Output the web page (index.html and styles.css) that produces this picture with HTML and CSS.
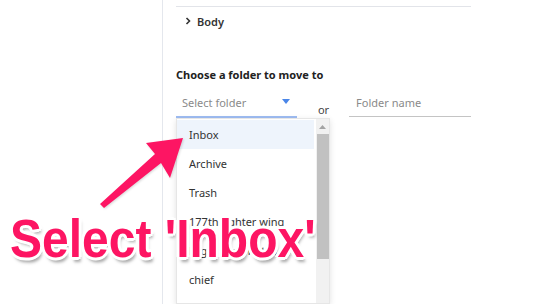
FILE: index.html
```html
<!DOCTYPE html>
<html lang="en">
<head>
    <meta charset="UTF-8">
    <title>Move to folder</title>
    <link rel="stylesheet" href="styles.css">
</head>
<body>
    <div class="side"></div>

    <main class="panel">
        <div class="divider"></div>

        <div class="section-row">
            <svg class="chevron" width="6" height="8" viewBox="0 0 6 8">
                <path d="M1.5 1 L4.5 4 L1.5 7" fill="none" stroke="#333" stroke-width="1.6"/>
            </svg>
            <span>Body</span>
        </div>

        <h2 class="heading">Choose a folder to move to</h2>

        <div class="move-row">
            <div class="select">
                <span class="placeholder">Select folder</span>
                <svg class="caret" width="8" height="5" viewBox="0 0 8 5">
                    <path d="M0 0 H8 L4 5 Z" fill="#4a86e8"/>
                </svg>

                <ul class="dropdown">
                    <li class="active">Inbox</li>
                    <li>Archive</li>
                    <li>Trash</li>
                    <li>177th fighter wing</li>
                    <li>Flight crew notes</li>
                    <li>chief</li>
                </ul>
                <div class="scrollbar">
                    <svg class="scroll-up" width="7" height="4" viewBox="0 0 7 4">
                        <path d="M0 4 L3.5 0 L7 4 Z" fill="#a3a3a3"/>
                    </svg>
                    <div class="thumb"></div>
                </div>
            </div>

            <span class="or">or</span>

            <div class="folder-input">
                <span class="placeholder">Folder name</span>
            </div>
        </div>
    </main>

    <svg class="arrow" width="549" height="304" viewBox="0 0 549 304">
        <polygon points="183,138 146,143 155,154 100,204 104,208 161,163 170,178" fill="#fd1563"/>
    </svg>

    <div class="callout">Select 'Inbox'</div>
</body>
</html>
```

FILE: styles.css
```css
html{
    overflow: hidden;
}

body{
    margin: 0;
    display: flex;
    height: 304px;
    overflow: hidden;
    background-color: white;
    font-family: "Noto Sans", "Open Sans", sans-serif;
    font-size: 11px;
    color: #333;
}

.side{
    width: 162px;
    border-right: 1px solid #e4e7ed;
    flex-shrink: 0;
}

.panel{
    padding-left: 13px;
    width: 295px;
}

.divider{
    margin-top: 6px;
    height: 1px;
    background-color: #e2e4e9;
}

.section-row{
    display: flex;
    align-items: center;
    gap: 6px;
    height: 28px;
    padding-left: 9px;
    font-weight: 600;
}

.heading{
    margin: 32px 0 0 0;
    font-size: 11px;
    line-height: 16px;
    font-weight: bold;
    color: #222;
}

.move-row{
    display: flex;
    align-items: flex-start;
    margin-top: 5px;
}

.select{
    position: relative;
    width: 108px;
    height: 28px;
    border-bottom: 2px solid #9ebcf2;
    display: flex;
    align-items: center;
    justify-content: space-between;
    padding: 0 7px 0 6px;
}

.placeholder{
    color: #8a8a8a;
}

.caret{
    margin-top: -2px;
}

.dropdown{
    position: absolute;
    top: 30px;
    left: 0;
    width: 154px;
    height: 186px;
    margin: 0;
    padding: 1px 15px 0 0;
    box-sizing: border-box;
    list-style: none;
    background-color: white;
    border: 1px solid #e6e6e6;
    box-shadow: 0 2px 6px rgba(0, 0, 0, 0.12);
    overflow: hidden;
}

.dropdown li{
    height: 29px;
    line-height: 29px;
    padding-left: 12px;
}

.dropdown li.active{
    background-color: #eef4fc;
}

.scrollbar{
    position: absolute;
    top: 31px;
    left: 140px;
    width: 13px;
    height: 184px;
    background-color: #f1f1f1;
    display: flex;
    flex-direction: column;
    align-items: center;
}

.scroll-up{
    margin-top: 6px;
}

.thumb{
    margin-top: 5px;
    width: 12px;
    height: 125px;
    background-color: #c1c1c1;
}

.or{
    margin: 14px 0 0 21px;
    color: #444;
    line-height: 16px;
}

.folder-input{
    margin-left: 20px;
    width: 115px;
    height: 28px;
    padding-left: 7px;
    border-bottom: 1px solid #c4c4c4;
    display: flex;
    align-items: center;
}

.arrow{
    position: absolute;
    top: 0;
    left: 0;
    filter: drop-shadow(1px 1px 1px rgba(0, 0, 0, 0.15));
}

.callout{
    position: absolute;
    left: 10px;
    top: 212px;
    font-family: "Liberation Sans", Arial, sans-serif;
    font-weight: bold;
    font-size: 48px;
    line-height: 50px;
    color: #fd1563;
    text-shadow:
        2px 0 0 #fff, -2px 0 0 #fff, 0 2px 0 #fff, 0 -2px 0 #fff,
        2px 2px 0 #fff, -2px -2px 0 #fff, 2px -2px 0 #fff, -2px 2px 0 #fff,
        3px 0 0 #fff, -3px 0 0 #fff, 0 3px 0 #fff, 0 -3px 0 #fff,
        2px 4px 3px rgba(0, 0, 0, 0.35);
    transform: scaleY(1.1);
    transform-origin: top left;
}
```
